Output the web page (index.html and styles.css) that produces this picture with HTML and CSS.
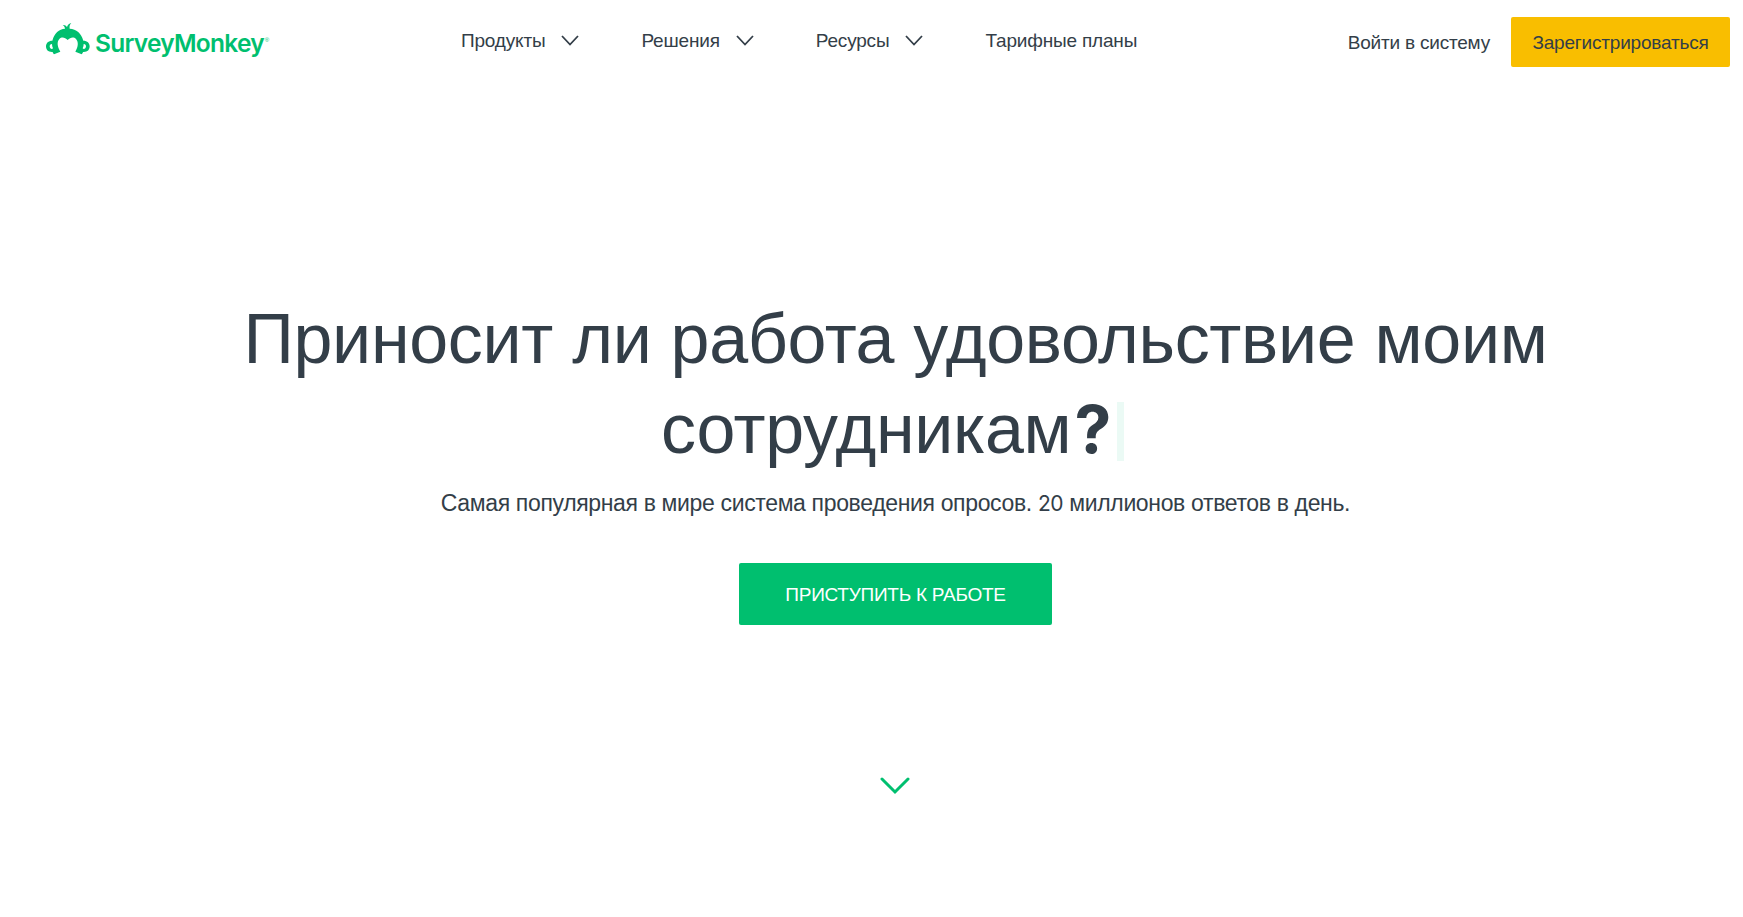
FILE: index.html
```html
<!DOCTYPE html>
<html lang="ru">
<head>
    <meta charset="UTF-8">
    <meta name="viewport" content="width=device-width, initial-scale=1.0">
    <title>SurveyMonkey</title>
    <link rel="stylesheet" href="styles.css">
</head>
<body>
    <header class="header">
        <a class="logo" href="#">
            <svg class="logo-icon" viewBox="0 0 132 96">
                <path fill="#00bf6f" d="M19 53C25 30 39 18 57 17C56 11 53 8 50 6C56 5 60 8 63 12C65 6 70 1 76 0C71 5 70 10 71 17C91 18 106 30 112 53C124 53 131 60 131 70C131 81 124 88 111 87C111 89 109 91 107 94L88 86C97 71 98 57 90 48C83 41 73 43 65 51C57 43 47 41 40 48C32 57 34 71 43 86L24 94C22 91 20 89 20 87C7 88 0 81 0 70C0 60 7 53 19 53Z"/>
                <path fill="#fff" d="M18 63C13 63 11 66 11 70C11 75 14 78 18 78L21 76C19 72 18 68 18 63ZM113 63C118 63 120 66 120 70C120 75 117 78 113 78L110 76C112 72 113 68 113 63Z"/>
            </svg>
            <span class="logo-text">SurveyMonkey</span>
            <span class="logo-mark">®</span>
        </a>
        <nav class="nav">
            <a class="nav-item" href="#">Продукты
                <svg class="chevron" viewBox="0 0 18 11"><path d="M1 1l8 8.5L17 1"/></svg>
            </a>
            <a class="nav-item" href="#">Решения
                <svg class="chevron" viewBox="0 0 18 11"><path d="M1 1l8 8.5L17 1"/></svg>
            </a>
            <a class="nav-item" href="#">Ресурсы
                <svg class="chevron" viewBox="0 0 18 11"><path d="M1 1l8 8.5L17 1"/></svg>
            </a>
            <a class="nav-item" href="#">Тарифные планы</a>
        </nav>
        <div class="account">
            <a class="login" href="#">Войти в систему</a>
            <a class="signup" href="#">Зарегистрироваться</a>
        </div>
    </header>

    <main class="hero">
        <h1 class="title">Приносит ли работа удовольствие моим<br>сотрудникам<span class="question">?</span><span class="cursor"></span></h1>
        <p class="subtitle">Самая популярная в мире система проведения опросов. <span class="digits">20</span> миллионов ответов в день.</p>
        <a class="start" href="#">ПРИСТУПИТЬ К РАБОТЕ</a>
        <svg class="scroll-down" viewBox="0 0 30 18"><path d="M2 2l13 13L28 2"/></svg>
    </main>
</body>
</html>
```
FILE: styles.css
```css
body {
    font-family: "Liberation Sans", Arial, sans-serif;
    margin: 0;
    height: 917px;
    overflow: hidden;
    background-color: #fff;
    color: #333e48;
}

a {
    color: inherit;
    text-decoration: none;
}

.header {
    display: flex;
    height: 84px;
    padding: 0 13px 0 46px;
    box-sizing: border-box;
}

.logo {
    display: flex;
    align-items: flex-start;
    width: 415px;
    color: #00bf6f;
}

.logo-icon {
    width: 44px;
    height: 32px;
    margin-top: 23px;
}

.logo-text {
    font-family: Inter, sans-serif;
    font-size: 24.5px;
    font-weight: 600;
    letter-spacing: -0.75px;
    line-height: 30px;
    margin: 28px 0 0 5px;
}

.logo-mark {
    font-size: 6px;
    line-height: 8px;
    margin: 36px 0 0 1px;
}

.nav {
    display: flex;
    font-size: 19px;
    letter-spacing: -0.18px;
    line-height: 22px;
    padding-top: 30px;
}

.nav-item {
    display: flex;
    height: 22px;
    margin-right: 62px;
    white-space: nowrap;
}

.chevron {
    width: 18px;
    height: 11px;
    margin: 5px 0 0 16px;
}

.chevron path {
    fill: none;
    stroke: #333e48;
    stroke-width: 1.8;
}

.account {
    display: flex;
    margin-left: auto;
    font-size: 19px;
    letter-spacing: -0.2px;
    line-height: 52px;
    padding-top: 17px;
    white-space: nowrap;
}

.signup {
    width: 219px;
    height: 50px;
    margin-left: 21px;
    border-radius: 2px;
    background-color: #f9be00;
    text-align: center;
}

.hero {
    display: flex;
    flex-direction: column;
    align-items: center;
    padding: 210px 0 0 48px;
}

.title {
    margin: 0;
    font-size: 70px;
    font-weight: 400;
    letter-spacing: -0.32px;
    line-height: 90px;
    text-align: center;
    white-space: nowrap;
}

.question {
    font-family: Inter, sans-serif;
    font-size: 66px;
    font-weight: 700;
    line-height: 1;
    margin-left: 3px;
}

.cursor {
    display: inline-block;
    width: 7px;
    height: 59px;
    margin: 0 6px;
    vertical-align: -8px;
    background-color: #ebfaf5;
}

.subtitle {
    margin: 14px 0 0;
    font-size: 23px;
    letter-spacing: -0.35px;
    line-height: 30px;
    white-space: nowrap;
}

.digits {
    font-family: Inter, sans-serif;
    font-size: 21px;
}

.start {
    width: 313px;
    height: 62px;
    margin-top: 44px;
    border-radius: 2px;
    background-color: #00bf6f;
    color: #fff;
    font-size: 19px;
    letter-spacing: -0.25px;
    line-height: 63px;
    text-align: center;
}

.scroll-down {
    width: 30px;
    height: 18px;
    margin: 152px 1px 0 0;
}

.scroll-down path {
    fill: none;
    stroke: #00bf6f;
    stroke-width: 3;
    stroke-linecap: round;
}
```
